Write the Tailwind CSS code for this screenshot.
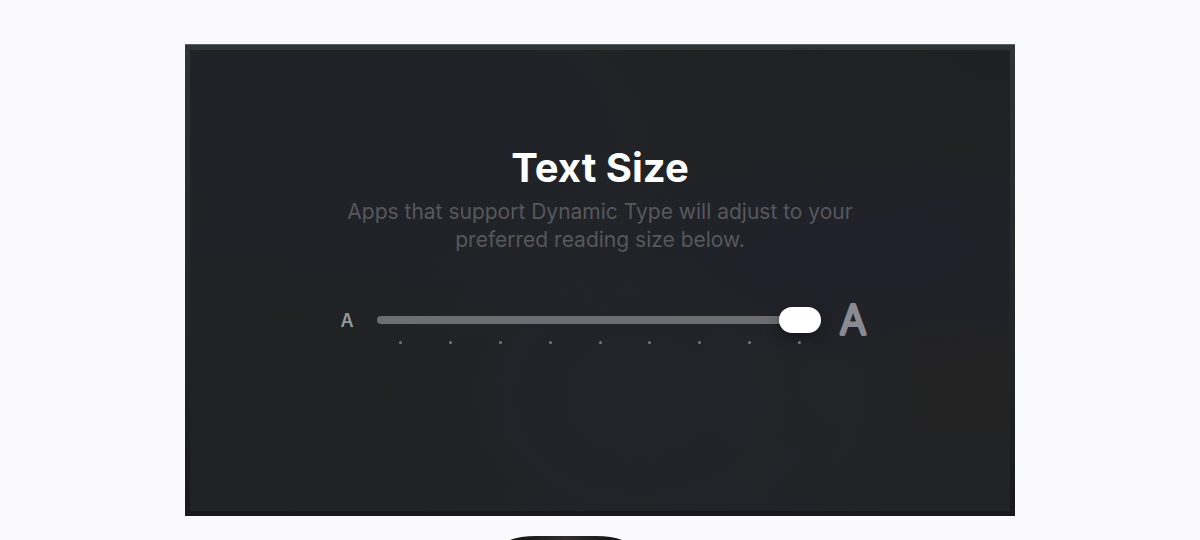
<!DOCTYPE html>
<html lang="en">
    <head>
        <meta charset="UTF-8">
        <meta name="viewport" content="width=device-width, initial-scale=1.0">
        <title>Text Size</title>
        <script src="https://cdn.jsdelivr.net/npm/@tailwindcss/browser@4"></script>
    </head>
    <body class="bg-[#fafafc] font-['Inter',sans-serif]">
      <main class="mx-auto flex w-full max-w-[830px] flex-col pt-11">
        <!-- bezel, lighter at the top -->
        <section class="border-t border-[#5b6360] bg-linear-to-b from-[#2f3332] via-[#232627] via-60% to-[#19191b] p-[5px]">
          <div class="flex flex-col items-center bg-[#212326] bg-[radial-gradient(ellipse_at_83%_44%,#20212c_0%,transparent_32%),radial-gradient(ellipse_at_22%_20%,#1f2229_0%,transparent_40%),radial-gradient(ellipse_at_55%_75%,#20252a_0%,transparent_45%),radial-gradient(ellipse_at_95%_72%,#242324_0%,transparent_30%),radial-gradient(ellipse_at_0%_80%,#202122_0%,transparent_45%),radial-gradient(ellipse_at_100%_0%,#1f2022_0%,transparent_35%)] px-6 pt-[92px] pb-[167px]">
            <h1 class="text-[40px] leading-[52px] font-bold text-white"><label for="text-size">Text Size</label></h1>
            <p class="mt-1 max-w-[520px] text-center text-[21px] leading-7 text-[#56585b]">Apps that support Dynamic Type will adjust to your preferred reading size below.</p>

            <div class="mt-[46px] flex w-full max-w-[534px] items-start pl-2">
              <svg class="h-10 w-3 shrink-0 overflow-visible" viewBox="0 0 12 40" aria-hidden="true">
                <text x="6" y="27" text-anchor="middle" class="fill-[#97989b] text-[18px] font-semibold">A</text>
              </svg>
              <div class="mr-[18px] ml-6 flex-1">
                <input id="text-size" type="range" min="0" max="8" step="1" value="8" class="block h-10 w-full appearance-none bg-transparent [&::-webkit-slider-runnable-track]:h-2 [&::-webkit-slider-runnable-track]:rounded-full [&::-webkit-slider-runnable-track]:bg-[#6c6e72] [&::-webkit-slider-thumb]:-mt-[9px] [&::-webkit-slider-thumb]:h-[26px] [&::-webkit-slider-thumb]:w-[42px] [&::-webkit-slider-thumb]:appearance-none [&::-webkit-slider-thumb]:rounded-full [&::-webkit-slider-thumb]:bg-white [&::-webkit-slider-thumb]:shadow-[0_4px_14px_rgba(0,0,0,0.35)]">
                <div class="mt-px flex justify-between pr-5 pl-[22px]">
                  <span class="size-[3px] rounded-full bg-[#77797d]"></span>
                  <span class="size-[3px] rounded-full bg-[#77797d]"></span>
                  <span class="size-[3px] rounded-full bg-[#77797d]"></span>
                  <span class="size-[3px] rounded-full bg-[#77797d]"></span>
                  <span class="size-[3px] rounded-full bg-[#77797d]"></span>
                  <span class="size-[3px] rounded-full bg-[#77797d]"></span>
                  <span class="size-[3px] rounded-full bg-[#77797d]"></span>
                  <span class="size-[3px] rounded-full bg-[#77797d]"></span>
                  <span class="size-[3px] rounded-full bg-[#77797d]"></span>
                </div>
              </div>
              <svg class="h-10 w-7 shrink-0 overflow-visible" viewBox="0 0 28 40" aria-hidden="true">
                <text x="14" y="34" text-anchor="middle" class="fill-[#8a8a92] stroke-[#8a8a92] text-[39px] font-extralight" stroke-width="4" stroke-linejoin="round">A</text>
              </svg>
            </div>
          </div>
        </section>

        <!-- top edge of the next figure -->
        <svg class="mt-5 ml-[325px] h-1 w-28" viewBox="0 0 112 4" aria-hidden="true">
          <defs>
            <linearGradient id="edge" x1="0" x2="1" y1="0" y2="0">
              <stop offset="0" stop-color="#111111"/>
              <stop offset="0.5" stop-color="#302e2e"/>
              <stop offset="1" stop-color="#111111"/>
            </linearGradient>
          </defs>
          <path d="M0 4Q10 0 26 0H86Q102 0 112 4Z" fill="url(#edge)"/>
        </svg>
      </main>
    </body>
</html>
